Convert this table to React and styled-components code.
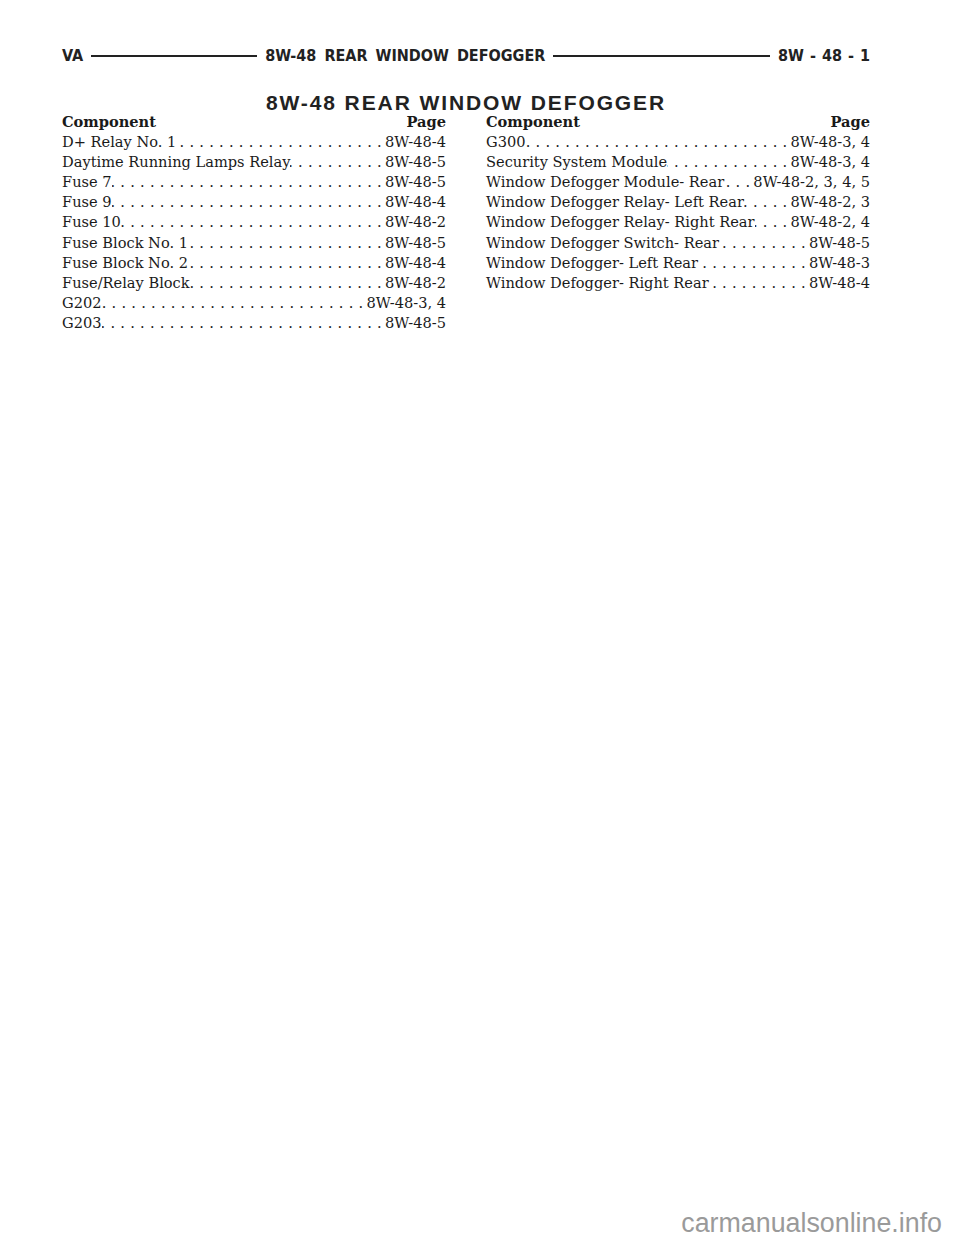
import React from "react";
import styled, { createGlobalStyle } from "styled-components";

const Global = createGlobalStyle`
  html, body { margin: 0; padding: 0; background: #fff; }
  body { width: 960px; height: 1242px; overflow: hidden; }
`;

const Page = styled.div`
  width: 960px;
  height: 1242px;
  box-sizing: border-box;
  padding: 44px 90px 0 62px;
  display: flex;
  flex-direction: column;
  color: #1a1a1a;
  position: relative;
`;

const RunningHead = styled.header`
  display: flex;
  align-items: center;
  gap: 6px;
  font-family: "DejaVu Sans Condensed", "DejaVu Sans", sans-serif;
  font-weight: bold;
  font-size: 16px;
  line-height: 24px;
  color: #222;
  white-space: nowrap;
`;

const HeadText = styled.span`
  word-spacing: ${(p) => p.$ws || "2px"};
`;

const Rule = styled.span`
  flex: ${(p) => p.$grow} 1 0;
  height: 2px;
  background: #222;
  margin: 0 2px;
`;

const Title = styled.h1`
  margin: 25px 0 0 0;
  text-align: center;
  font-family: "Liberation Sans", Arial, sans-serif;
  font-weight: bold;
  font-size: 21px;
  letter-spacing: 1.9px;
  line-height: 20px;
  color: #222;
`;

const Columns = styled.div`
  margin-top: -1px;
  display: grid;
  grid-template-columns: 384px 384px;
  column-gap: 40px;
  align-items: start;
`;

const Column = styled.div`
  display: flex;
  flex-direction: column;
  font-family: "DejaVu Serif", serif;
  font-size: 14.6px;
  line-height: 20.1px;
  color: #1a1a1a;
`;

const HeadRow = styled.div`
  display: flex;
  justify-content: space-between;
  font-weight: bold;
`;

const Row = styled.div`
  display: flex;
  white-space: nowrap;
`;

const Name = styled.span`
  flex: none;
`;

const Leader = styled.span`
  flex: 1;
  min-width: 0;
  overflow: hidden;
  direction: rtl;
  text-align: right;
  padding: 0 3px 0 5px;
  letter-spacing: 0.3px;
`;

const PageRef = styled.span`
  flex: none;
`;

const Watermark = styled.div`
  position: absolute;
  right: 18px;
  bottom: 3px;
  font-family: "Liberation Sans", Arial, sans-serif;
  font-size: 26.8px;
  color: #9a9a9a;
`;

const DOTS = ". ".repeat(60);

const left = [
  ["D+ Relay No. 1", "8W-48-4"],
  ["Daytime Running Lamps Relay", "8W-48-5"],
  ["Fuse 7", "8W-48-5"],
  ["Fuse 9", "8W-48-4"],
  ["Fuse 10", "8W-48-2"],
  ["Fuse Block No. 1", "8W-48-5"],
  ["Fuse Block No. 2", "8W-48-4"],
  ["Fuse/Relay Block", "8W-48-2"],
  ["G202", "8W-48-3, 4"],
  ["G203", "8W-48-5"],
];

const right = [
  ["G300", "8W-48-3, 4"],
  ["Security System Module", "8W-48-3, 4"],
  ["Window Defogger Module- Rear", "8W-48-2, 3, 4, 5"],
  ["Window Defogger Relay- Left Rear", "8W-48-2, 3"],
  ["Window Defogger Relay- Right Rear", "8W-48-2, 4"],
  ["Window Defogger Switch- Rear", "8W-48-5"],
  ["Window Defogger- Left Rear", "8W-48-3"],
  ["Window Defogger- Right Rear", "8W-48-4"],
];

function IndexColumn({ rows }) {
  return (
    <Column>
      <HeadRow>
        <span>Component</span>
        <span>Page</span>
      </HeadRow>
      {rows.map(([n, p]) => (
        <Row key={n}>
          <Name>{n}</Name>
          <Leader>{DOTS}</Leader>
          <PageRef>{p}</PageRef>
        </Row>
      ))}
    </Column>
  );
}

export default function App() {
  return (
    <>
      <Global />
      <Page>
        <RunningHead>
          <HeadText>VA</HeadText>
          <Rule $grow={170} />
          <HeadText $ws="3px">8W-48 REAR WINDOW DEFOGGER</HeadText>
          <Rule $grow={222} />
          <HeadText $ws="1px">8W - 48 - 1</HeadText>
        </RunningHead>
        <Title>8W-48 REAR WINDOW DEFOGGER</Title>
        <Columns>
          <IndexColumn rows={left} />
          <IndexColumn rows={right} />
        </Columns>
        <Watermark>carmanualsonline.info</Watermark>
      </Page>
    </>
  );
}
